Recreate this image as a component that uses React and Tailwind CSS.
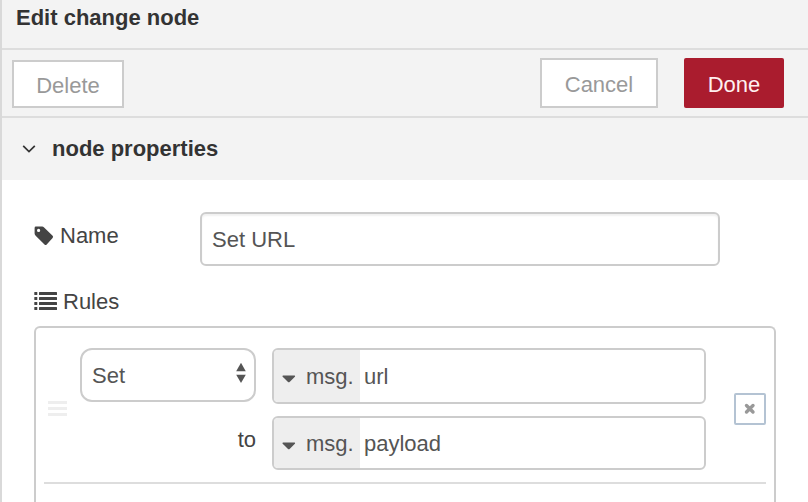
import React from "react";

function TagIcon() {
  return (
    <svg className="h-5 w-5 shrink-0" viewBox="0 0 20 20" fill="currentColor" aria-hidden="true">
      <path
        fillRule="evenodd"
        d="M1.9 0.6H8.1Q9.2 0.6 10.1 1.5L18.6 9.8Q19.6 10.9 18.6 11.9L12.7 18.5Q11.6 19.5 10.5 18.5L1.9 9.9Q0.6 8.6 0.6 7.4V2Q0.6 0.6 1.9 0.6ZM4.6 2.8A1.6 1.6 0 1 0 4.6 6A1.6 1.6 0 1 0 4.6 2.8Z"
      />
    </svg>
  );
}

function ListIcon() {
  return (
    <svg className="h-5 w-[23px] shrink-0" viewBox="0 0 23 20" fill="currentColor" aria-hidden="true">
      {[0, 5, 10, 15].map((y) => (
        <g key={y}>
          <rect x="0.3" y={y} width="3" height="3" rx="0.5" />
          <rect x="5" y={y} width="18" height="3" rx="0.5" />
        </g>
      ))}
    </svg>
  );
}

function TypedInput({ label, value, className }) {
  return (
    <div className={"flex overflow-hidden rounded-md border-2 border-[#ccc] bg-white " + className}>
      <button
        type="button"
        aria-label={label + " type: msg."}
        className="flex w-[86px] shrink-0 items-center gap-2.5 bg-[#eee] pt-0.5 pl-2 text-[#555]"
      >
        <svg className="mt-1 h-2 w-3.5 shrink-0" viewBox="0 0 14 8" fill="currentColor" aria-hidden="true">
          <path d="M1 0.6H12.6Q13.5 0.8 12.9 1.7L7.6 7Q6.8 7.7 6 7L0.7 1.7Q0 0.8 1 0.6Z" />
        </svg>
        <span>msg.</span>
      </button>
      <input
        type="text"
        aria-label={label}
        defaultValue={value}
        className="min-w-0 flex-1 bg-transparent px-1 pt-0.5 text-[#555] outline-none"
      />
    </div>
  );
}

export default function App() {
  return (
    <div className="flex h-screen flex-col overflow-hidden border-l-2 border-[#d9d9d9] bg-white font-['Liberation_Sans',Arial,sans-serif] text-[22px] leading-7 text-[#444]">
      <header className="shrink-0 border-b-2 border-[#ddd] bg-[#f3f3f3] px-3.5 pt-1 pb-4">
        <h1 className="font-bold text-[#333]">Edit change node</h1>
      </header>

      <div className="flex shrink-0 items-end border-b-2 border-[#ddd] bg-[#f3f3f3] pt-2 pr-6 pb-2 pl-2.5">
        <button type="button" className="h-12 w-28 border-2 border-[#ccc] bg-white pt-1 text-[#999]">
          Delete
        </button>
        <button type="button" className="ml-auto h-[50px] w-[118px] border-2 border-[#ccc] bg-white pt-1 text-[#999]">
          Cancel
        </button>
        <button type="button" className="ml-[26px] h-[50px] w-[100px] rounded-[2px] bg-[#aa1c2e] pt-1 text-[#fff0f0]">
          Done
        </button>
      </div>

      <button
        type="button"
        aria-expanded="true"
        className="flex h-[62px] shrink-0 items-center gap-4 bg-[#f3f3f3] pl-5 text-left font-bold text-[#333]"
      >
        <svg className="h-2.5 w-3.5" viewBox="0 0 14 10" fill="none" stroke="currentColor" strokeWidth="1.7" aria-hidden="true">
          <path d="M1.2 1.8L7 7.6L12.8 1.8" />
        </svg>
        <span>node properties</span>
      </button>

      <form className="flex min-h-0 flex-1 flex-col px-8 pt-8">
        <div className="mr-14 flex shrink-0 items-start">
          <label htmlFor="node-name" className="flex w-[166px] shrink-0 items-center gap-1.5 pt-2.5">
            <TagIcon />
            Name
          </label>
          <input
            id="node-name"
            type="text"
            defaultValue="Set URL"
            className="h-[54px] min-w-0 flex-1 rounded-md border-2 border-[#ccc] bg-white px-2.5 pt-0.5 text-[#555] shadow-[inset_0_2px_2px_rgba(0,0,0,0.06)] outline-none"
          />
        </div>

        <div id="rules-label" className="mt-[22px] flex shrink-0 items-center gap-1.5">
          <ListIcon />
          Rules
        </div>

        <ul
          aria-labelledby="rules-label"
          className="mt-2.5 min-h-0 flex-1 overflow-hidden rounded-t-md border-2 border-b-0 border-[#ccc] px-2"
        >
          <li className="flex items-center border-b-2 border-[#ddd] pt-5 pb-3">
            <svg className="ml-1 h-[18px] w-5 shrink-0" viewBox="0 0 20 18" fill="#eee" aria-hidden="true">
              <rect y="1" width="19" height="3" />
              <rect y="7" width="19" height="3" />
              <rect y="13" width="19" height="3" />
            </svg>

            <div className="ml-3 flex w-44 shrink-0 flex-col self-start">
              <div className="relative">
                <select
                  aria-label="Action"
                  defaultValue="set"
                  className="h-[54px] w-full appearance-none rounded-xl border-2 border-[#ccc] bg-white px-2.5 pt-0.5 text-[#555] outline-none"
                >
                  <option value="set">Set</option>
                  <option value="change">Change</option>
                  <option value="delete">Delete</option>
                  <option value="move">Move</option>
                </select>
                <svg
                  className="pointer-events-none absolute top-3.5 right-2.5 h-[22px] w-2.5 text-[#555]"
                  viewBox="0 0 10 22"
                  fill="currentColor"
                  aria-hidden="true"
                >
                  <path d="M5 0.8L9.8 9.2H0.2Z" />
                  <path d="M5 21L9.8 12.8H0.2Z" />
                </svg>
              </div>
              <span className="mt-6 self-end">to</span>
            </div>

            <div className="ml-4 flex min-w-0 flex-1 flex-col gap-3">
              <TypedInput label="Property" value="url" className="h-14" />
              <TypedInput label="Value" value="payload" className="h-[54px]" />
            </div>

            <button
              type="button"
              aria-label="Remove rule"
              className="ml-7 flex h-8 w-8 shrink-0 items-center justify-center rounded-[2px] border-2 border-[#b4c3d3] bg-white text-[#999]"
            >
              <svg className="h-3 w-3" viewBox="0 0 12 12" stroke="currentColor" strokeWidth="3.4" strokeLinecap="round" aria-hidden="true">
                <path d="M2.5 2.5L9 9M9 2.5L2.5 9" />
              </svg>
            </button>
          </li>
        </ul>
      </form>
    </div>
  );
}
